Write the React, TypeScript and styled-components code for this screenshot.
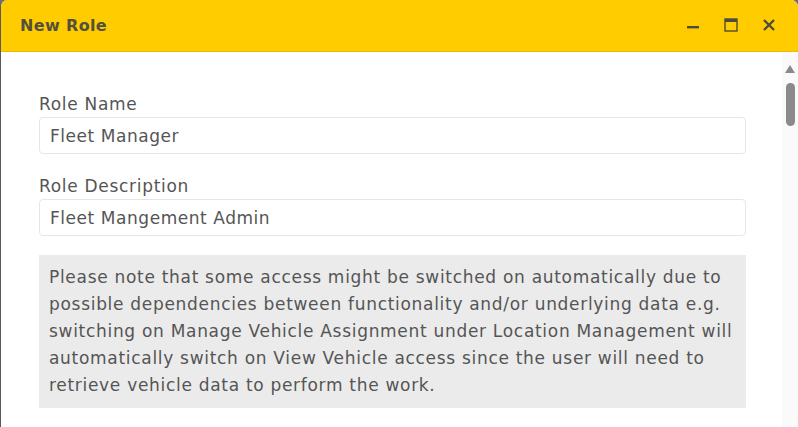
import React from "react";
import styled, { createGlobalStyle } from "styled-components";

const Global = createGlobalStyle`
  html, body { margin: 0; padding: 0; background: #6e6e6e; }
  body { font-family: "DejaVu Sans", "Liberation Sans", sans-serif; }
  #root { width: 798px; height: 427px; }
`;

const Window = styled.div`
  width: 798px;
  height: 427px;
  display: flex;
  flex-direction: column;
  background: #fff;
  border-radius: 7px 7px 0 0;
  overflow: hidden;
  box-sizing: border-box;
  border-left: 1px solid #5a5a5a;
`;

const TitleBar = styled.div`
  height: 52px;
  flex: 0 0 52px;
  background: #ffcc00;
  border-bottom: 1px solid #e8bc00;
  box-sizing: border-box;
  display: flex;
  align-items: center;
  padding: 0 22px 0 19px;
`;

const Title = styled.div`
  flex: 1;
  font-weight: 700;
  font-size: 16px;
  letter-spacing: 0.35px;
  color: #55503d;
  margin-top: -1px;
`;

const Controls = styled.div`
  display: flex;
  align-items: center;
  gap: 24px;
  margin-top: -1px;
`;

const CtrlBtn = styled.div`
  width: 14px;
  height: 14px;
  display: flex;
  align-items: center;
  justify-content: center;
  color: #4f4b3b;
`;

const Body = styled.div`
  flex: 1;
  display: flex;
  min-height: 0;
`;

const Content = styled.div`
  flex: 1;
  padding: 41px 36px 0 38px;
  display: flex;
  flex-direction: column;
  color: #555;
`;

const Label = styled.div`
  font-size: 17px;
  line-height: 22px;
  margin-bottom: 2px;
  color: #555;
  letter-spacing: 0.7px;
`;

const Field = styled.div`
  height: 37px;
  box-sizing: border-box;
  border: 1px solid #e6e6e6;
  border-radius: 4px;
  padding: 0 10px;
  display: flex;
  align-items: center;
  font-size: 17px;
  color: #555;
  letter-spacing: 0.55px;
  margin-bottom: 21px;
`;

const Note = styled.div`
  background: #ebebeb;
  padding: 9px 2px 9px 10px;
  font-size: 17px;
  line-height: 27px;
  color: #555;
  letter-spacing: 0.7px;
  margin-top: -2px;
`;

const Scrollbar = styled.div`
  width: 16px;
  flex: 0 0 16px;
  background: #fafafa;
  display: flex;
  flex-direction: column;
  align-items: center;
  padding-top: 13px;
`;

const Arrow = styled.div`
  width: 0;
  height: 0;
  border-left: 5px solid transparent;
  border-right: 5px solid transparent;
  border-bottom: 8px solid #8a8a8a;
  margin-bottom: 10px;
`;

const Thumb = styled.div`
  width: 9px;
  height: 43px;
  border-radius: 5px;
  background: #8a8a8a;
`;

export default function App() {
  return (
    <>
      <Global />
      <Window>
        <TitleBar>
          <Title>New Role</Title>
          <Controls>
            <CtrlBtn>
              <svg width="14" height="14" viewBox="0 0 14 14">
                <rect x="1" y="8" width="12" height="2.4" fill="currentColor" />
              </svg>
            </CtrlBtn>
            <CtrlBtn>
              <svg width="14" height="14" viewBox="0 0 14 14">
                <rect x="1" y="1" width="12" height="12" fill="none" stroke="currentColor" strokeWidth="1.4" />
                <rect x="1" y="1" width="12" height="3" fill="currentColor" />
              </svg>
            </CtrlBtn>
            <CtrlBtn>
              <svg width="14" height="14" viewBox="0 0 14 14">
                <path d="M2 2 L12 12 M12 2 L2 12" stroke="currentColor" strokeWidth="2.4" strokeLinecap="butt" />
              </svg>
            </CtrlBtn>
          </Controls>
        </TitleBar>
        <Body>
          <Content>
            <Label>Role Name</Label>
            <Field>Fleet Manager</Field>
            <Label>Role Description</Label>
            <Field>Fleet Mangement Admin</Field>
            <Note>
              Please note that some access might be switched on automatically due to possible
              dependencies between functionality and/or underlying data e.g. switching on Manage
              Vehicle Assignment under Location Management will automatically switch on View
              Vehicle access since the user will need to retrieve vehicle data to perform the work.
            </Note>
          </Content>
          <Scrollbar>
            <Arrow />
            <Thumb />
          </Scrollbar>
        </Body>
      </Window>
    </>
  );
}
